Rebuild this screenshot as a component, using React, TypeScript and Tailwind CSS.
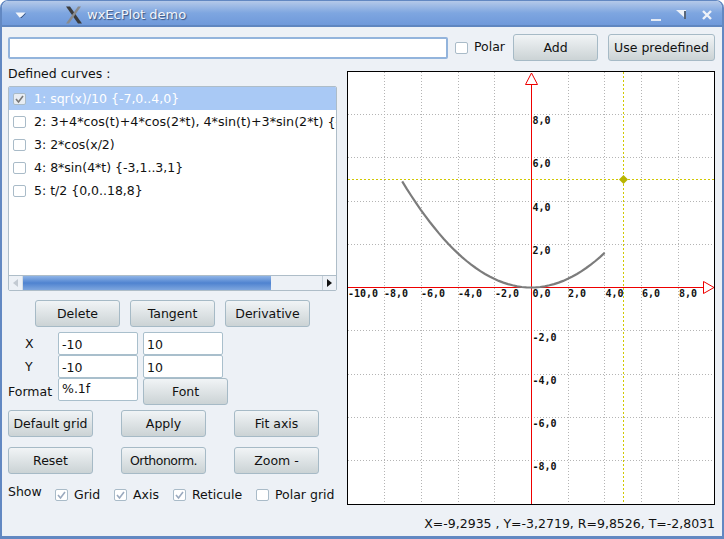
const font = { fontFamily: '"DejaVu Sans", sans-serif' };

function Btn({ label, w = "w-[85px]", h = "h-[27px]", tight }: { label: string; w?: string; h?: string; tight?: boolean }) {
  return (
    <button className={`${w} ${h} shrink-0 rounded-[3px] border border-[#a6bac6] bg-gradient-to-b from-[#f1f4f6] to-[#cbd3d5] pt-[1px] text-[12.5px] text-[#111] flex items-center justify-center whitespace-nowrap ${tight ? "tracking-[-0.5px]" : ""}`}>
      {label}
    </button>
  );
}

function Check({ checked, dark }: { checked?: boolean; dark?: boolean }) {
  return (
    <span className={`w-[13px] h-[12px] shrink-0 rounded-[2px] border border-[#a9bbc8] flex items-center justify-center ${dark ? "bg-[#e8edf3]" : "bg-white"}`}>
      {checked && (
        <svg width="11" height="10" viewBox="0 0 11 10">
          <path d="M2 5 L4.5 8 L9 2" fill="none" stroke={dark ? "#777" : "#9aa9be"} strokeWidth="1.6" />
        </svg>
      )}
    </span>
  );
}

function Field({ value, w = "w-[80px]", top }: { value: string; w?: string; top?: boolean }) {
  return (
    <div className={`${w} h-[23px] shrink-0 rounded-[2px] border border-[#a9bfcc] bg-white pl-[3px] pr-[4px] text-[12.5px] text-[#111] ${top ? "leading-[19px]" : "leading-[23px]"}`}>
      {value}
    </div>
  );
}

const curves = [
  "1: sqr(x)/10 {-7,0..4,0}",
  "2: 3+4*cos(t)+4*cos(2*t), 4*sin(t)+3*sin(2*t) {-3,1..3,1}",
  "3: 2*cos(x/2)",
  "4: 8*sin(4*t) {-3,1..3,1}",
  "5: t/2 {0,0..18,8}",
];

// plot coordinates, relative to the inner area of the frame
const gridX = [36, 73, 110, 146, 183, 220, 256, 293, 330];
const gridY = [42, 85, 129, 172, 215, 258, 302, 345, 388];
const xLabels: [string, number][] = [["-10,0", 0], ["-8,0", 36], ["-6,0", 73], ["-4,0", 110], ["-2,0", 147], ["0,0", 184.5], ["2,0", 220], ["4,0", 257.5], ["6,0", 294], ["8,0", 331]];
const yLabels: [string, number][] = [["8,0", 52], ["6,0", 95], ["4,0", 139], ["2,0", 182], ["-2,0", 269], ["-4,0", 312], ["-6,0", 355], ["-8,0", 398]];

function parabola() {
  const pts: string[] = [];
  for (let x = -7; x <= 4.001; x += 0.25) {
    pts.push(`${(183 + 18.4 * x).toFixed(1)},${(215.5 - (x * x) / 10 * 21.65).toFixed(1)}`);
  }
  return pts.join(" ");
}

function Plot() {
  return (
    <div className="w-[368px] h-[434px] border border-black bg-white shrink-0">
      <svg width="366" height="432" className="block">
        {gridX.filter((x) => x !== 183).map((x) => (
          <line key={x} x1={x + 0.5} y1="0" x2={x + 0.5} y2="432" stroke="#b4b4b4" strokeDasharray="1 2" />
        ))}
        {gridY.filter((y) => y !== 215).map((y) => (
          <line key={y} x1="0" y1={y + 0.5} x2="366" y2={y + 0.5} stroke="#b4b4b4" strokeDasharray="1 2" />
        ))}
        <line x1="275.5" y1="0" x2="275.5" y2="432" stroke="#d0c800" strokeDasharray="2 2" />
        <line x1="0" y1="107.5" x2="366" y2="107.5" stroke="#d0c800" strokeDasharray="2 2" />
        <line x1="183.5" y1="12" x2="183.5" y2="432" stroke="#ee0000" />
        <line x1="0" y1="215.5" x2="355" y2="215.5" stroke="#ee0000" />
        <path d="M183.5 1 L177.5 12.5 H189.5 Z" fill="#fff" stroke="#ee0000" />
        <path d="M366 215.5 L355.5 209.5 V221.5 Z" fill="#fff" stroke="#ee0000" />
        <polyline points={parabola()} fill="none" stroke="#7c7c7c" strokeWidth="2.2" />
        <path d="M275.5 103 L280 107.5 L275.5 112 L271 107.5 Z" fill="#b8b400" />
        <g style={{ fontFamily: '"DejaVu Sans Mono", monospace', fontWeight: 700, fontSize: 10 }} fill="#111">
          {xLabels.map(([t, x]) => (
            <text key={t} x={x} y="225">{t}</text>
          ))}
          {yLabels.map(([t, y]) => (
            <text key={t} x="184.5" y={y}>{t}</text>
          ))}
        </g>
      </svg>
    </div>
  );
}

export default function App() {
  return (
    <div className="w-[724px] h-[539px] flex flex-col overflow-hidden bg-white" style={font}>
      <div className="flex-1 flex flex-col rounded-t-[8px] border-x-[2px] border-t border-b-[3px] border-[#6288c2] bg-[#edf1f6] overflow-hidden">
        {/* title bar */}
        <div className="h-[26px] shrink-0 flex items-center bg-gradient-to-b from-[#b4c9e9] via-[#7ea6e0] to-[#6f99da] border-b-[2px] border-[#5f86c0] pt-[4px] pl-[13px] pr-[10px]">
          <svg width="11" height="6" viewBox="0 0 11 6">
            <path d="M0.5 0.5 H10.5 L6 5.5 H4.5 Z" fill="#f2f5fa" />
            <path d="M8 3.5 L10.5 1 V2 L6.5 6 H5 Z" fill="#2f4a78" />
          </svg>
          <svg width="18" height="18" viewBox="0 0 18 18" className="ml-[39px]">
            <path d="M1 0.5 L5 0.5 L17 17.5 L13 17.5 Z" fill="#3c3c3c" />
            <path d="M16 0.5 L13 0.5 L1 17.5 L4 17.5 Z" fill="#8a8a8a" />
          </svg>
          <span className="ml-[4px] text-[13px] text-[#f2f5fa] [text-shadow:1px_1px_1px_#34507c]">wxEcPlot demo</span>
          <div className="ml-auto flex items-center gap-[15px]">
            <span className="w-[10px] h-[2px] mt-[10px] bg-[#e4eaf4]" />
            <svg width="11" height="10" viewBox="0 0 11 10">
              <path d="M0 0 H10 V9 Z" fill="#eef2f8" />
              <path d="M8 1 H10 V9 H8 Z" fill="#58667a" />
            </svg>
            <svg width="10" height="10" viewBox="0 0 10 10">
              <path d="M1 1 L9 9 M9 1 L1 9" stroke="#eef2f8" strokeWidth="2.4" />
            </svg>
          </div>
        </div>

        <div className="flex-1 flex flex-col pl-[6px] pr-[7px] pt-[7px]">
          {/* top row */}
          <div className="flex items-center h-[27px]">
            <div className="w-[440px] h-[22px] border-[2px] border-[#93b4dc] rounded-[2px] bg-white" />
            <span className="ml-[7px]"><Check /></span>
            <span className="ml-[6px] text-[12.5px] text-[#111]">Polar</span>
            <span className="ml-auto"><Btn label="Add" /></span>
            <span className="ml-[10px]"><Btn label="Use predefined" w="w-[107px]" /></span>
          </div>

          <div className="flex mt-[10px] gap-[10px]">
            {/* left column */}
            <div className="w-[329px] shrink-0 flex flex-col">
              <div className="h-[15px] mt-[-5px] text-[12.5px] leading-[15px] text-[#111]">Defined curves :</div>
              <div className="mt-[5px] w-[329px] h-[205px] border border-[#aebdc8] rounded-[2px] flex flex-col overflow-hidden bg-white">
                <div className="flex-1">
                  {curves.map((c, i) => (
                    <div key={c} className={`h-[23px] flex items-center pl-[4px] gap-[8px] whitespace-nowrap ${i === 0 ? "bg-[#a9c9f5] text-white" : "text-[#111]"} ${i === 1 ? "text-[12.7px]" : "text-[12.5px]"}`}>
                      <Check checked={i === 0} dark={i === 0} />
                      <span className="pt-[1px]">{c}</span>
                    </div>
                  ))}
                </div>
                <div className="h-[15px] shrink-0 flex items-stretch bg-[#edf1f6] border-t border-[#aebdc8]">
                  <div className="w-[14px] flex items-center justify-center border-r border-[#d5dde4]">
                    <svg width="5" height="8" viewBox="0 0 5 8"><path d="M5 0 V8 L0 4 Z" fill="#c3cad2" /></svg>
                  </div>
                  <div className="w-[248px] bg-gradient-to-b from-[#8fb4e6] via-[#4f83d0] to-[#7ea6de]" />
                  <div className="ml-auto w-[14px] flex items-center justify-center border-l border-[#c5d0d8]">
                    <svg width="5" height="8" viewBox="0 0 5 8"><path d="M0 0 V8 L5 4 Z" fill="#111" /></svg>
                  </div>
                </div>
              </div>

              <div className="flex mt-[9px] pl-[27px] gap-[10px]">
                <Btn label="Delete" />
                <Btn label="Tangent" />
                <Btn label="Derivative" />
              </div>

              <div className="flex mt-[5px] items-center">
                <span className="w-[50px] pl-[17px] pt-[2px] text-[12.5px] text-[#111]">X</span>
                <Field value="-10" />
                <span className="ml-[5px]"><Field value="10" /></span>
              </div>
              <div className="flex items-center">
                <span className="w-[50px] pl-[17px] pt-[2px] text-[12.5px] text-[#111]">Y</span>
                <Field value="-10" />
                <span className="ml-[5px]"><Field value="10" /></span>
              </div>
              <div className="flex items-start">
                <span className="w-[50px] pt-[5px] text-[12.5px] text-[#111]">Format</span>
                <Field value="%.1f" top />
                <span className="ml-[5px]"><Btn label="Font" /></span>
              </div>

              <div className="flex mt-[5px] gap-[28px]">
                <Btn label="Default grid" />
                <Btn label="Apply" />
                <Btn label="Fit axis" />
              </div>
              <div className="flex mt-[10px] gap-[28px]">
                <Btn label="Reset" />
                <Btn label="Orthonorm." tight />
                <Btn label="Zoom -" />
              </div>

              <div className="flex items-center mt-[12px] text-[12.5px] text-[#111]">
                <span className="w-[47px] -mt-[7px]">Show</span>
                <Check checked />
                <span className="ml-[6px] w-[40px]">Grid</span>
                <Check checked />
                <span className="ml-[6px] w-[40px]">Axis</span>
                <Check checked />
                <span className="ml-[6px] w-[64px]">Reticule</span>
                <Check />
                <span className="ml-[6px] whitespace-nowrap">Polar grid</span>
              </div>
            </div>

            {/* plot */}
            <Plot />
          </div>

          <div className="mt-[11px] text-right text-[12.5px] leading-[15px] text-[#111]">
            X=-9,2935 , Y=-3,2719, R=9,8526, T=-2,8031
          </div>
        </div>
      </div>
    </div>
  );
}
